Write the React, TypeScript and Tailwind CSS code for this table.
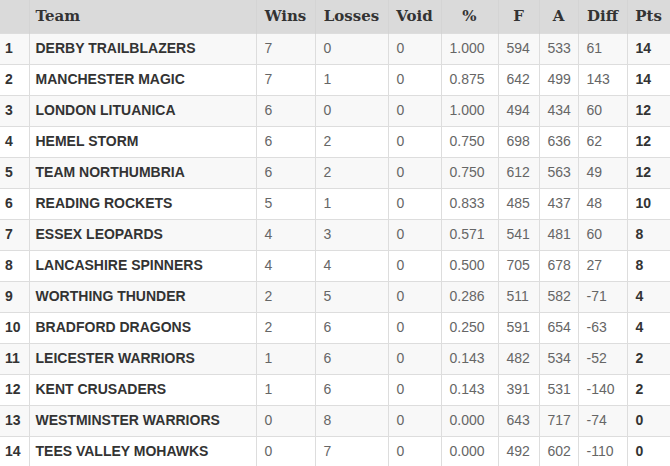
const rows: [string, number, number, number, string, number, number, number, number][] = [
  ["DERBY TRAILBLAZERS", 7, 0, 0, "1.000", 594, 533, 61, 14],
  ["MANCHESTER MAGIC", 7, 1, 0, "0.875", 642, 499, 143, 14],
  ["LONDON LITUANICA", 6, 0, 0, "1.000", 494, 434, 60, 12],
  ["HEMEL STORM", 6, 2, 0, "0.750", 698, 636, 62, 12],
  ["TEAM NORTHUMBRIA", 6, 2, 0, "0.750", 612, 563, 49, 12],
  ["READING ROCKETS", 5, 1, 0, "0.833", 485, 437, 48, 10],
  ["ESSEX LEOPARDS", 4, 3, 0, "0.571", 541, 481, 60, 8],
  ["LANCASHIRE SPINNERS", 4, 4, 0, "0.500", 705, 678, 27, 8],
  ["WORTHING THUNDER", 2, 5, 0, "0.286", 511, 582, -71, 4],
  ["BRADFORD DRAGONS", 2, 6, 0, "0.250", 591, 654, -63, 4],
  ["LEICESTER WARRIORS", 1, 6, 0, "0.143", 482, 534, -52, 2],
  ["KENT CRUSADERS", 1, 6, 0, "0.143", 391, 531, -140, 2],
  ["WESTMINSTER WARRIORS", 0, 8, 0, "0.000", 643, 717, -74, 0],
  ["TEES VALLEY MOHAWKS", 0, 7, 0, "0.000", 492, 602, -110, 0],
];

const heads = ["Wins", "Losses", "Void", "%", "F", "A", "Diff", "Pts"];

export default function App() {
  return (
    <div className="w-[670px] h-[466px] overflow-hidden bg-white font-['Liberation_Sans',Arial,sans-serif]">
      <table className="w-[670px] table-fixed border-collapse text-[14px]">
        <colgroup>
          <col className="w-[29px]" />
          <col className="w-[227px]" />
          <col className="w-[59px]" />
          <col className="w-[73px]" />
          <col className="w-[53px]" />
          <col className="w-[57px]" />
          <col className="w-[41px]" />
          <col className="w-[39px]" />
          <col className="w-[49px]" />
          <col className="w-[43px]" />
        </colgroup>
        <thead>
          <tr className="h-[33px] bg-[#dadada] text-[#333] font-['DejaVu_Serif',serif] text-[15px] font-bold">
            <th className="border-r border-[#d4d4d4]"></th>
            <th className="text-left pl-[6px] border-x border-[#d4d4d4]">Team</th>
            {heads.map((h) => (
              <th key={h} className="text-center border-x border-[#d4d4d4]">
                {h}
              </th>
            ))}
          </tr>
        </thead>
        <tbody>
          {rows.map((r, i) => (
            <tr key={r[0]} className={`h-[31px] ${i % 2 === 0 ? "bg-[#f8f8f8]" : "bg-white"}`}>
              <td className="pl-[5px] font-bold text-[#333] border-y border-r border-[#dddddd]">{i + 1}</td>
              <td className="pl-[6px] font-bold text-[#333] border border-[#dddddd] whitespace-nowrap">{r[0]}</td>
              {r.slice(1, 8).map((v, j) => (
                <td key={j} className="pl-[8px] text-[#666] border border-[#dddddd]">
                  {v}
                </td>
              ))}
              <td className="pl-[8px] font-bold text-[#333] border-y border-l border-[#dddddd]">{r[8]}</td>
            </tr>
          ))}
        </tbody>
      </table>
    </div>
  );
}
